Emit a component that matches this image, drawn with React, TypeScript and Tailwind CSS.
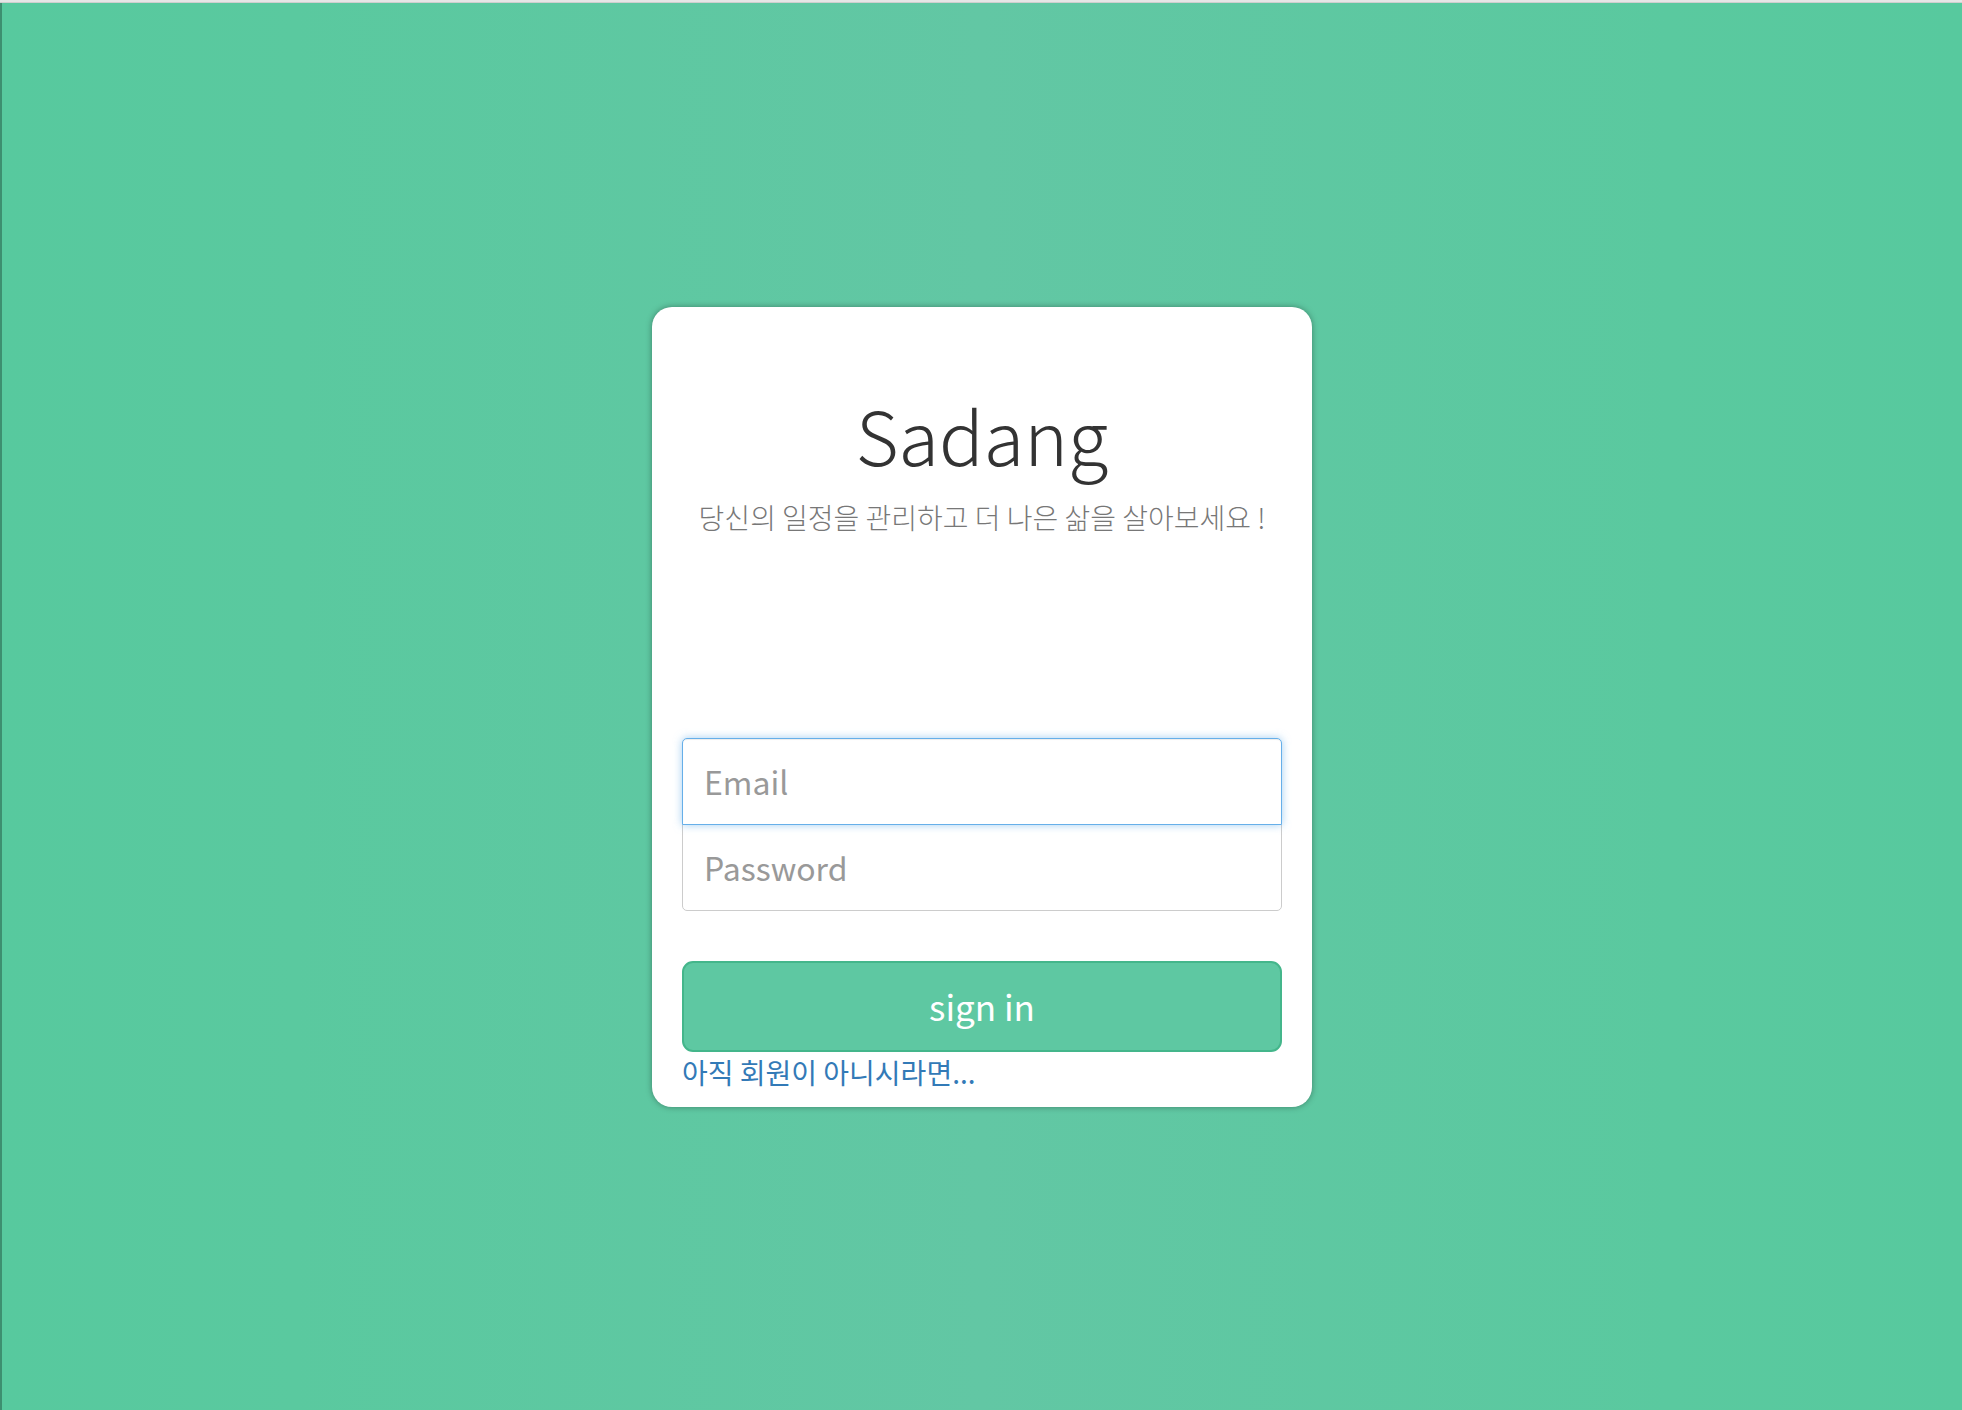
import { useState } from "react";

const font = { fontFamily: '"Noto Sans CJK KR", "Noto Sans", sans-serif' };

const App = () => {
  const [email, setEmail] = useState("");
  const [password, setPassword] = useState("");

  return (
    <div
      className="flex flex-col w-full h-[1410px] overflow-hidden bg-[linear-gradient(to_right,#57c99e_0%,#5ac99f_15%,#62c7a4_50%,#5ac99f_85%,#57c99e_100%)]"
      style={font}
    >
      {/* window chrome strip */}
      <div className="h-[3px] bg-[#e6e6e6] border-b border-[#cfcfcf]" />
      <div className="flex flex-1 items-center justify-center border-l-2 border-[#3d8f70]">
        <div className="flex flex-col w-[660px] h-[800px] px-[30px] pt-[84px] bg-white rounded-[20px] shadow-[0_0_6px_rgba(0,0,0,0.35)]">
          {/* Heading */}
          <h1 className="text-center text-[74px] leading-[86px] font-light text-[#333]">Sadang</h1>
          <p className="mt-[22px] text-center text-[28px] leading-[36px] font-light text-[#777]">
            당신의 일정을 관리하고 더 나은 삶을 살아보세요 !
          </p>

          {/* Form */}
          <form className="flex flex-col mt-[203px]" onSubmit={(e) => e.preventDefault()}>
            <input
              type="email"
              autoFocus
              value={email}
              onChange={(e) => setEmail(e.target.value)}
              placeholder="Email"
              className="relative z-10 h-[87px] px-[21px] text-[32px] text-[#555] placeholder:text-[#999] bg-white border border-[#66afe9] rounded-t-[5px] outline-none shadow-[inset_0_1px_1px_rgba(0,0,0,0.075),0_0_8px_rgba(102,175,233,0.6)] caret-[#333]"
            />
            <input
              type="password"
              value={password}
              onChange={(e) => setPassword(e.target.value)}
              placeholder="Password"
              className="h-[87px] -mt-px px-[21px] text-[32px] text-[#555] placeholder:text-[#999] bg-white border border-[#ccc] rounded-b-[5px] outline-none"
            />
            <button
              type="submit"
              className="mt-[50px] h-[91px] text-[35px] text-white bg-[#5ec8a2] border-2 border-[#44b68b] rounded-[11px]"
            >
              sign in
            </button>
            <a href="#" className="mt-[2px] text-[28px] leading-[36px] text-[#337ab7]">
              아직 회원이 아니시라면...
            </a>
          </form>
        </div>
      </div>
    </div>
  );
};

export default App;
